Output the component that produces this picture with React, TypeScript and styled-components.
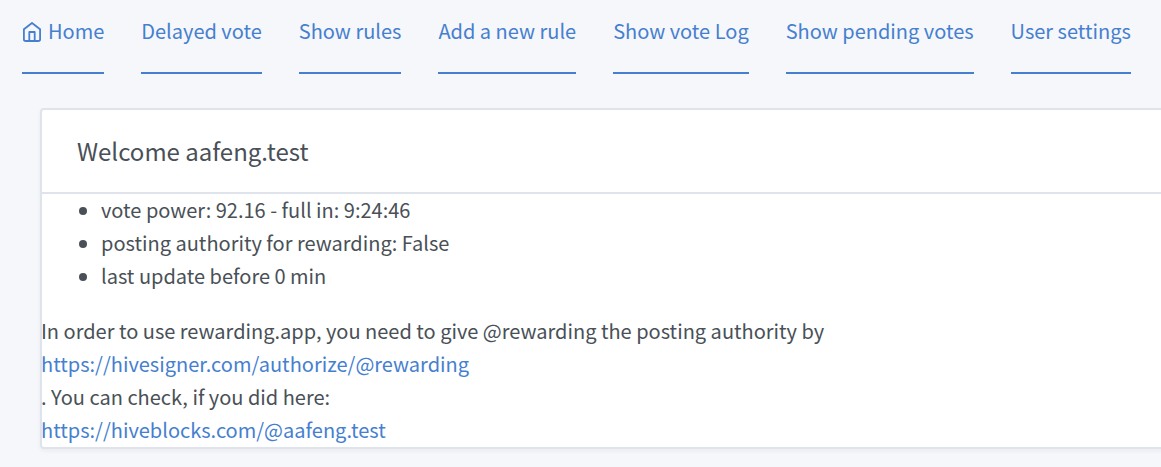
import React from "react";
import styled, { createGlobalStyle } from "styled-components";

const GlobalStyle = createGlobalStyle`
  * { box-sizing: border-box; }
  body {
    margin: 0;
    background: #f5f7fb;
    color: #495057;
    font-family: "Noto Sans CJK SC", "Noto Sans", sans-serif;
    font-size: 20px;
    line-height: 33px;
    overflow-x: hidden;
  }
`;

const Page = styled.div`
  overflow: hidden;
  padding-bottom: 18px;
`;

const Nav = styled.nav`
  display: flex;
  gap: 37px;
  padding: 14px 22px 0;
  white-space: nowrap;
`;

const NavLink = styled.a`
  display: flex;
  align-items: center;
  gap: 7px;
  height: 60px;
  padding-bottom: 26px;
  border-bottom: 2px solid #467fcf;
  color: #467fcf;
  text-decoration: none;
`;

const Icon = styled.svg`
  width: 18px;
  height: 20px;
  margin: 4px 0 0 1px;
  flex: none;
`;

const Card = styled.section`
  margin: 34px -24px 0 40px;
  background: #fff;
  border: 2px solid #dfe3eb;
  border-radius: 4px;
  box-shadow: 0 2px 4px rgba(0, 0, 0, 0.05);
`;

const CardHeader = styled.header`
  display: flex;
  align-items: center;
  height: 84px;
  padding: 0 35px;
  border-bottom: 2px solid #dfe3eb;
`;

const Title = styled.h1`
  margin: 0;
  font-size: 24px;
  font-weight: 400;
  line-height: 30px;
`;

const CardBody = styled.div`
  margin: -1px 0 0 -1px;
  padding-bottom: 1px;
`;

const StatusList = styled.ul`
  margin: 0 0 22px;
  padding-left: 60px;
`;

const Line = styled.div``;

const TextLink = styled.a`
  color: #467fcf;
  text-decoration: none;
`;

const HomeIcon = () => (
  <Icon
    viewBox="2 1 20 22"
    fill="none"
    stroke="currentColor"
    strokeWidth="2"
    strokeLinecap="round"
    strokeLinejoin="round"
    aria-hidden="true"
  >
    <path d="M3 9l9-7 9 7v11a2 2 0 0 1-2 2H5a2 2 0 0 1-2-2z" />
    <path d="M9 22V12h6v10" />
  </Icon>
);

const pages = [
  "Delayed vote",
  "Show rules",
  "Add a new rule",
  "Show vote Log",
  "Show pending votes",
  "User settings",
];

const statuses = [
  "vote power: 92.16 - full in: 9:24:46",
  "posting authority for rewarding: False",
  "last update before 0 min",
];

export default function App() {
  return (
    <Page>
      <GlobalStyle />
      <Nav>
        <NavLink href="#home">
          <HomeIcon />
          Home
        </NavLink>
        {pages.map((name) => (
          <NavLink key={name} href="#page">
            {name}
          </NavLink>
        ))}
      </Nav>
      <Card>
        <CardHeader>
          <Title>Welcome aafeng.test</Title>
        </CardHeader>
        <CardBody>
          <StatusList>
            {statuses.map((status) => (
              <li key={status}>{status}</li>
            ))}
          </StatusList>
          <Line>
            In order to use rewarding.app, you need to give @rewarding the
            posting authority by
          </Line>
          <Line>
            <TextLink href="#authorize">
              https://hivesigner.com/authorize/@rewarding
            </TextLink>
          </Line>
          <Line>. You can check, if you did here:</Line>
          <Line>
            <TextLink href="#account">
              https://hiveblocks.com/@aafeng.test
            </TextLink>
          </Line>
        </CardBody>
      </Card>
    </Page>
  );
}
